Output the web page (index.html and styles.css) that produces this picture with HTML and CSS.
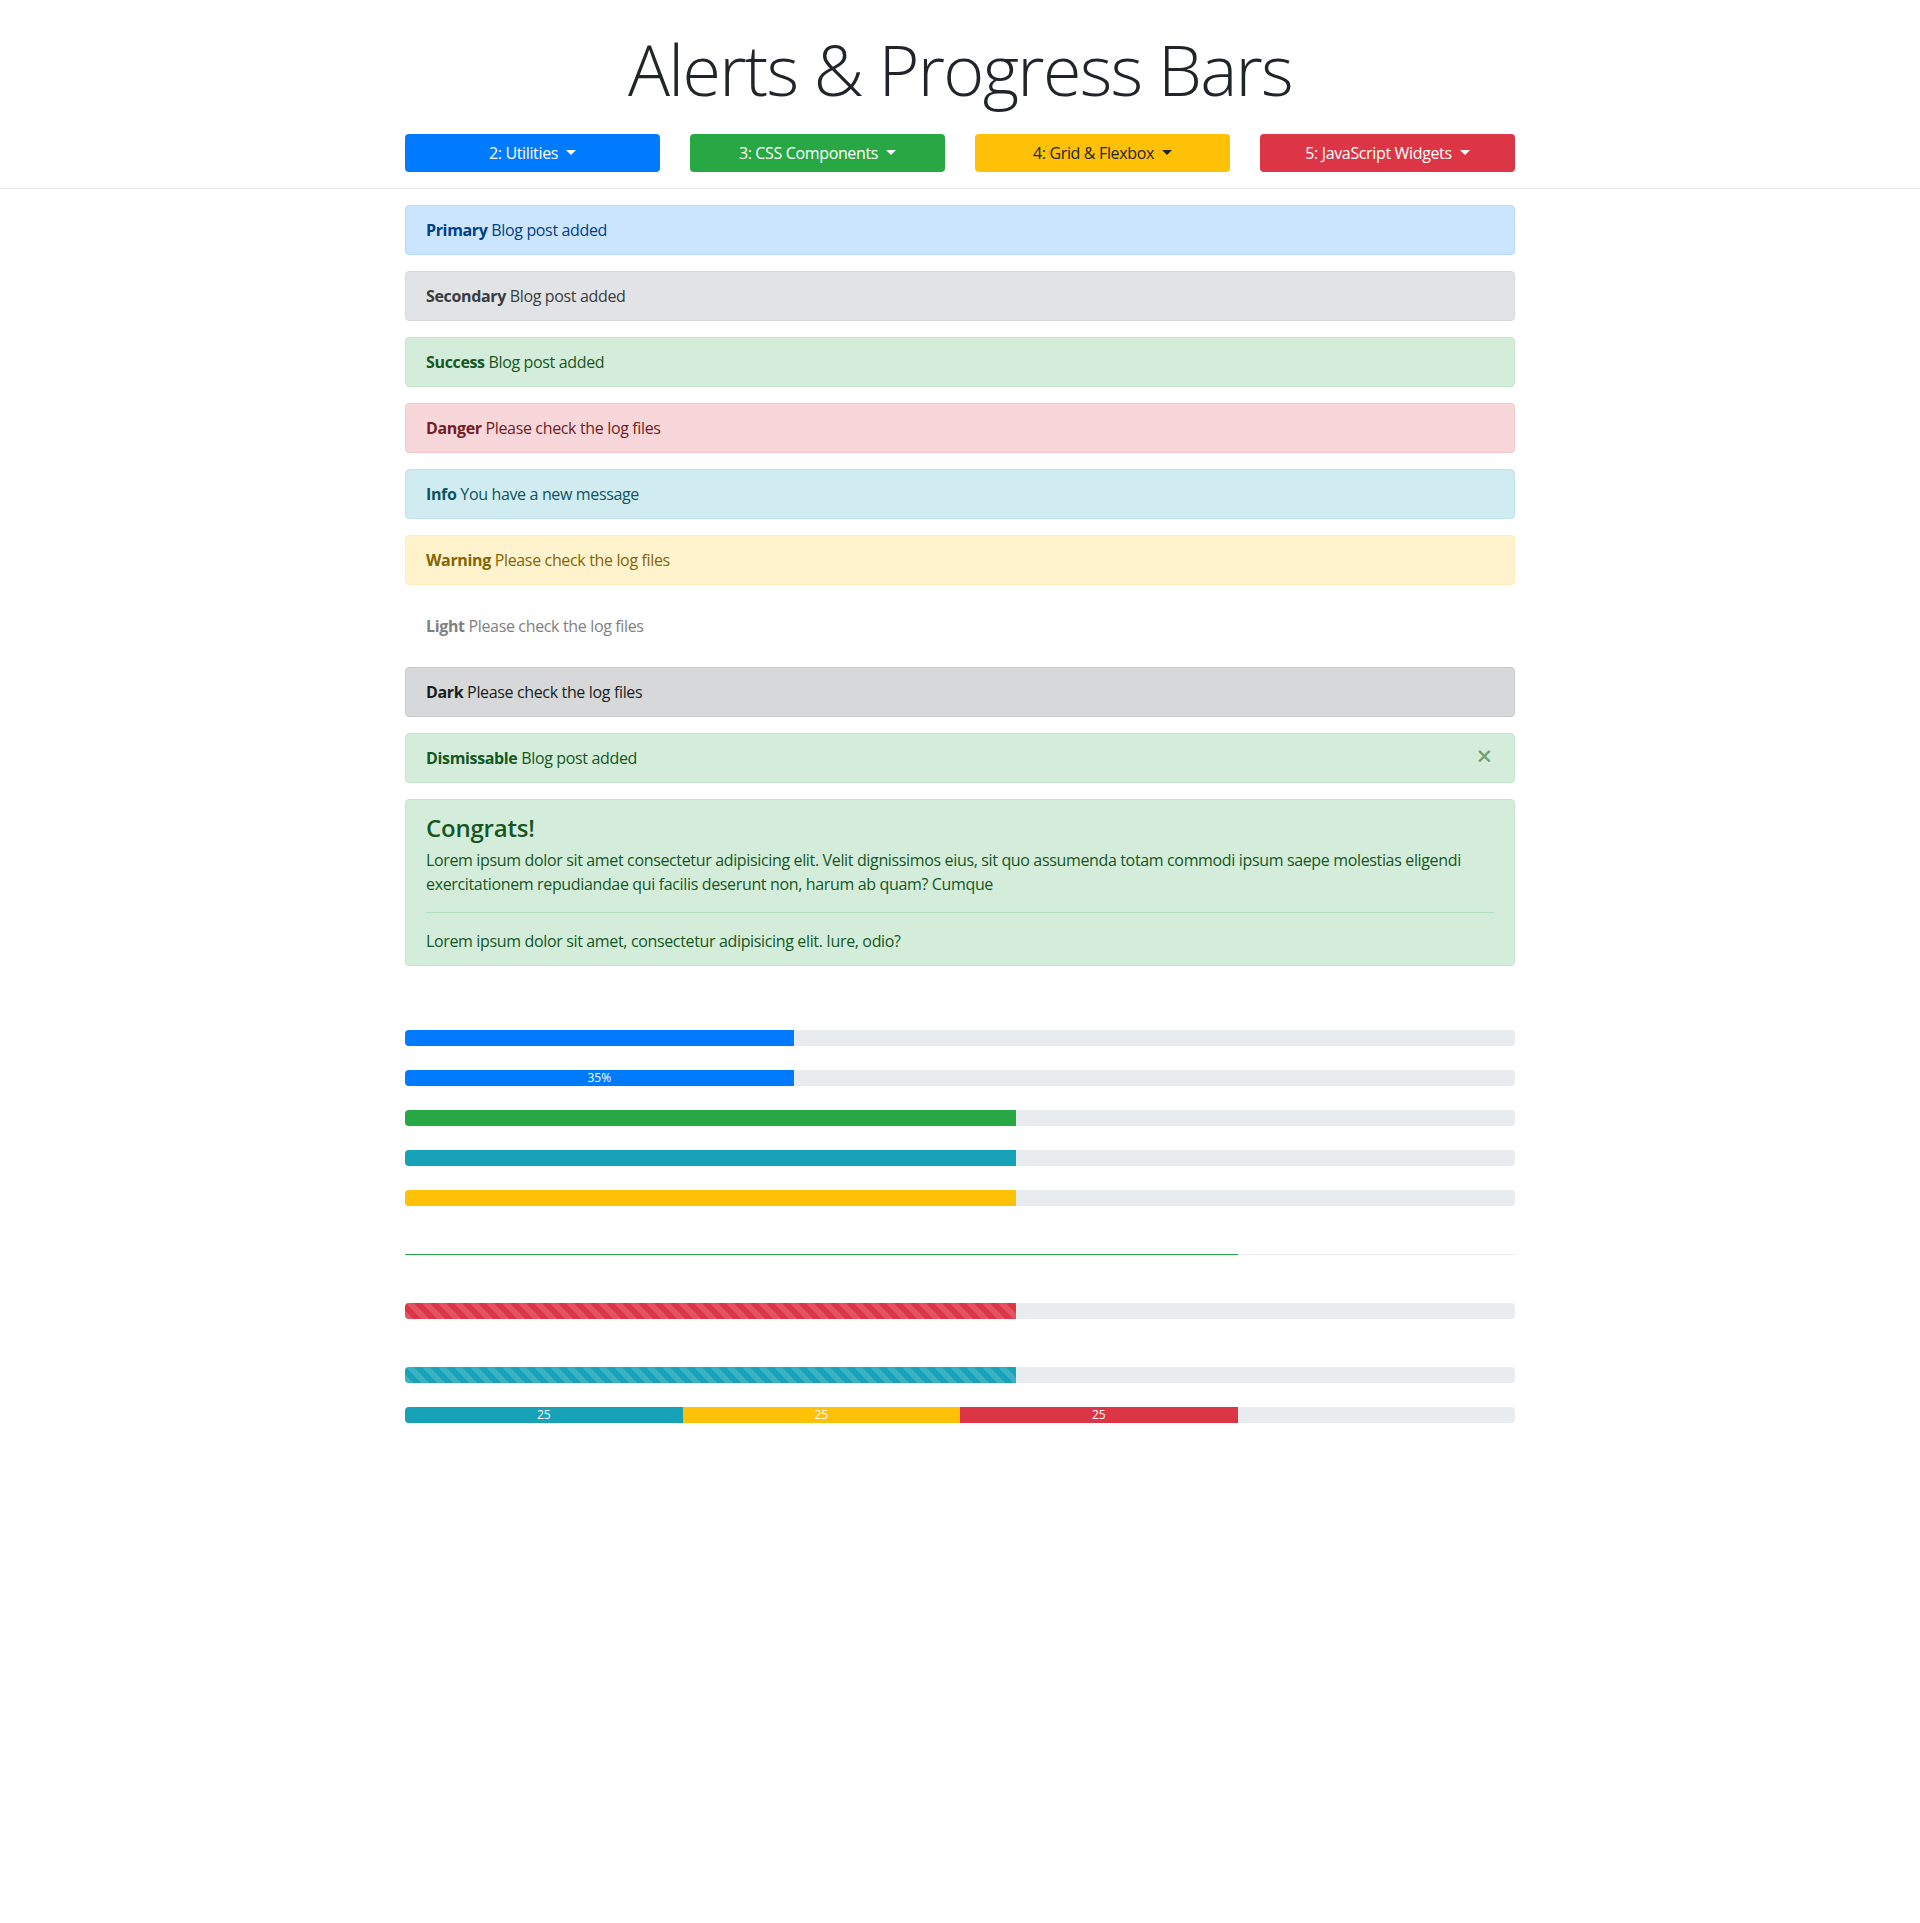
FILE: index.html
```html
<!DOCTYPE html>
<html lang="en">
<head>
    <meta charset="UTF-8">
    <meta name="viewport" content="width=device-width, initial-scale=1.0">
    <title>Alerts &amp; Progress Bars</title>
    <link rel="stylesheet" href="styles.css">
</head>
<body>
    <!-- 상단 헤더 -->
    <header class="page-head">
        <h1 class="title">Alerts &amp; Progress Bars</h1>
        <div class="wrap">
            <nav class="menu">
                <button class="menu-btn btn-blue">2: Utilities<span class="caret"></span></button>
                <button class="menu-btn btn-green">3: CSS Components<span class="caret"></span></button>
                <button class="menu-btn btn-yellow">4: Grid &amp; Flexbox<span class="caret"></span></button>
                <button class="menu-btn btn-red">5: JavaScript Widgets<span class="caret"></span></button>
            </nav>
        </div>
    </header>

    <main class="wrap content">
        <!-- 알림 -->
        <div class="alert alert-primary"><strong>Primary</strong> Blog post added</div>
        <div class="alert alert-secondary"><strong>Secondary</strong> Blog post added</div>
        <div class="alert alert-success"><strong>Success</strong> Blog post added</div>
        <div class="alert alert-danger"><strong>Danger</strong> Please check the log files</div>
        <div class="alert alert-info"><strong>Info</strong> You have a new message</div>
        <div class="alert alert-warning"><strong>Warning</strong> Please check the log files</div>
        <div class="alert alert-light"><strong>Light</strong> Please check the log files</div>
        <div class="alert alert-dark"><strong>Dark</strong> Please check the log files</div>
        <div class="alert alert-success dismissible">
            <strong>Dismissable</strong> Blog post added
            <button class="close" id="closeAlertBtn">&times;</button>
        </div>
        <div class="alert alert-success">
            <h4 class="alert-heading">Congrats!</h4>
            <p>Lorem ipsum dolor sit amet consectetur adipisicing elit. Velit dignissimos eius, sit quo assumenda totam commodi ipsum saepe molestias eligendi exercitationem repudiandae qui facilis deserunt non, harum ab quam? Cumque</p>
            <hr>
            <p class="last">Lorem ipsum dolor sit amet, consectetur adipisicing elit. Iure, odio?</p>
        </div>

        <!-- 진행 바 -->
        <section class="bars">
            <div class="progress"><div class="bar bg-blue" style="width: 35%"></div></div>
            <div class="progress"><div class="bar bg-blue" style="width: 35%">35%</div></div>
            <div class="progress"><div class="bar bg-green" style="width: 55%"></div></div>
            <div class="progress"><div class="bar bg-teal" style="width: 55%"></div></div>
            <div class="progress"><div class="bar bg-yellow" style="width: 55%"></div></div>
            <div class="progress thin"><div class="bar bg-green" style="width: 75%"></div></div>
            <div class="progress spaced"><div class="bar bg-red striped" style="width: 55%"></div></div>
            <div class="progress"><div class="bar bg-teal striped" style="width: 55%"></div></div>
            <div class="progress">
                <div class="bar bg-teal" style="width: 25%">25</div>
                <div class="bar bg-yellow" style="width: 25%">25</div>
                <div class="bar bg-red" style="width: 25%">25</div>
            </div>
        </section>
    </main>

    <script>
        document.getElementById('closeAlertBtn').addEventListener('click', function() {
            this.parentElement.style.display = 'none';
        });
    </script>
</body>
</html>
```

FILE: styles.css
```css
/* 기본 스타일 */
body {
    margin: 0;
    font-family: "Open Sans", "Noto Sans", sans-serif;
    font-size: 16px;
    line-height: 1.5;
    letter-spacing: -0.35px;
    color: #212529;
    background-color: #fff;
}

.wrap {
    width: 1110px;
    margin: 0 auto;
}

/* 헤더 */
.page-head {
    padding: 27px 0 16px;
    border-bottom: 1px solid #e6e6e6;
}

.title {
    margin: 0 0 23px;
    font-size: 70px;
    font-weight: 300;
    line-height: 1.2;
    letter-spacing: -1.7px;
    text-align: center;
}

.menu {
    display: grid;
    grid-template-columns: repeat(4, 1fr);
    gap: 30px;
}

.menu-btn {
    padding: 6px 12px;
    border: 1px solid transparent;
    border-radius: 4px;
    font-family: inherit;
    font-size: 16px;
    line-height: 1.5;
    letter-spacing: inherit;
    color: #fff;
    cursor: pointer;
}

.caret {
    display: inline-block;
    margin-left: 8px;
    vertical-align: 4px;
    border-top: 5px solid;
    border-right: 5px solid transparent;
    border-left: 5px solid transparent;
}

.btn-blue { background-color: #007bff; }
.btn-green { background-color: #28a745; }
.btn-yellow { background-color: #ffc107; color: #212529; }
.btn-red { background-color: #dc3545; }

/* 알림 */
.content {
    padding-top: 16px;
}

.alert {
    position: relative;
    padding: 12px 20px;
    margin-bottom: 16px;
    border: 1px solid transparent;
    border-radius: 4px;
}

.alert strong {
    font-weight: 700;
}

.alert-primary { color: #004085; background-color: #cce5ff; border-color: #b8daff; }
.alert-secondary { color: #383d41; background-color: #e2e3e5; border-color: #d6d8db; }
.alert-success { color: #155724; background-color: #d4edda; border-color: #c3e6cb; }
.alert-danger { color: #721c24; background-color: #f8d7da; border-color: #f5c6cb; }
.alert-info { color: #0c5460; background-color: #d1ecf1; border-color: #bee5eb; }
.alert-warning { color: #856404; background-color: #fff3cd; border-color: #ffeeba; }
.alert-light { color: #818182; background-color: #fefefe; border-color: #fdfdfe; }
.alert-dark { color: #1b1e21; background-color: #d6d8d9; border-color: #c6c8ca; }

.dismissible {
    padding-right: 64px;
}

.close {
    position: absolute;
    top: 0;
    right: 0;
    padding: 12px 21px;
    border: 0;
    background: transparent;
    font-family: "DejaVu Sans", sans-serif;
    font-size: 21px;
    font-weight: 700;
    line-height: 1;
    color: inherit;
    text-shadow: 0 1px 0 #fff;
    opacity: .5;
    cursor: pointer;
}

.alert-heading {
    margin: 0 0 5px;
    padding-top: 2px;
    font-size: 24px;
    font-weight: 600;
    line-height: 1.2;
    letter-spacing: -0.2px;
}

.alert p {
    margin: 0 0 16px;
}

.alert p.last {
    margin-bottom: 0;
}

.alert hr {
    margin: 14px 0 16px;
    border: 0;
    border-top: 1px solid #b1dfbb;
}

/* 진행 바 */
.bars {
    padding-top: 48px;
    padding-bottom: 40px;
}

.progress {
    display: flex;
    height: 16px;
    margin-bottom: 24px;
    overflow: hidden;
    font-size: 12px;
    line-height: 16px;
    letter-spacing: 0;
    background-color: #e9ecef;
    border-radius: 4px;
}

.progress.thin {
    height: 1px;
    margin-top: 48px;
    margin-bottom: 48px;
}

.progress.spaced {
    margin-bottom: 48px;
}

.bar {
    color: #fff;
    text-align: center;
    white-space: nowrap;
}

.bg-blue { background-color: #007bff; }
.bg-green { background-color: #28a745; }
.bg-teal { background-color: #17a2b8; }
.bg-yellow { background-color: #ffc107; }
.bg-red { background-color: #dc3545; }

.striped {
    background-image: linear-gradient(45deg, rgba(255,255,255,.15) 25%, transparent 25%, transparent 50%, rgba(255,255,255,.15) 50%, rgba(255,255,255,.15) 75%, transparent 75%, transparent);
    background-size: 16px 16px;
}
```
